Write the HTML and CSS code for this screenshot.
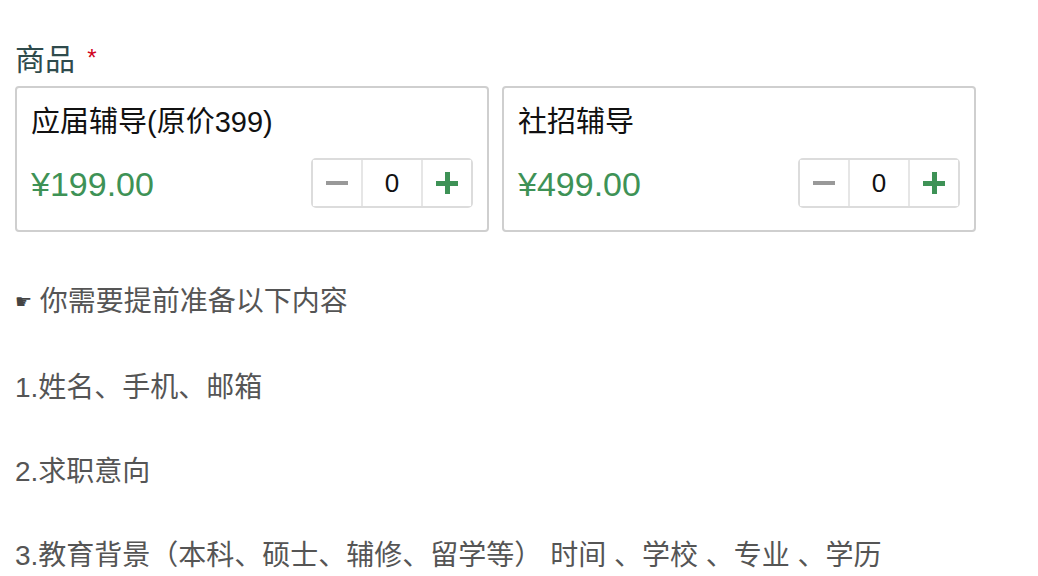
FILE: index.html
```html
<!DOCTYPE html>
<html lang="zh-CN">
<head>
    <meta charset="UTF-8">
    <meta name="viewport" content="width=device-width, initial-scale=1.0">
    <title>商品</title>
    <link rel="stylesheet" href="styles.css">
</head>
<body>
<div class="page">
    <div class="field-label">商品 <span class="required">*</span></div>

    <div class="goods">
        <div class="goods-card">
            <div class="goods-name">应届辅导(原价399)</div>
            <div class="goods-row">
                <span class="goods-price">¥199.00</span>
                <div class="stepper">
                    <button class="step minus" aria-label="减少"><span class="bar"></span></button>
                    <input class="count" type="text" value="0">
                    <button class="step plus" aria-label="增加"><span class="bar"></span><span class="bar vert"></span></button>
                </div>
            </div>
        </div>
        <div class="goods-card">
            <div class="goods-name">社招辅导</div>
            <div class="goods-row">
                <span class="goods-price">¥499.00</span>
                <div class="stepper">
                    <button class="step minus" aria-label="减少"><span class="bar"></span></button>
                    <input class="count" type="text" value="0">
                    <button class="step plus" aria-label="增加"><span class="bar"></span><span class="bar vert"></span></button>
                </div>
            </div>
        </div>
    </div>

    <div class="notes">
        <p><span class="hand">☛</span> 你需要提前准备以下内容</p>
        <p>1.姓名、手机、邮箱</p>
        <p>2.求职意向</p>
        <p>3.教育背景（本科、硕士、辅修、留学等） 时间 、学校 、专业 、学历</p>
    </div>
</div>
</body>
</html>
```

FILE: styles.css
```css
body {
    font-family: "Liberation Sans", "Noto Sans CJK SC", sans-serif;
    background-color: #fff;
    margin: 0;
    padding: 0;
}
.page {
    padding: 40px 15px 0;
}
.field-label {
    font-size: 30px;
    line-height: 40px;
    color: #2f4b4c;
}
.required {
    color: #d0021b;
    font-size: 24px;
    vertical-align: top;
    position: relative;
    top: -2px;
    margin-left: 4px;
}
.goods {
    display: flex;
    gap: 13px;
    margin-top: 6px;
    width: 961px;
}
.goods-card {
    flex: 1;
    border: 2px solid #cfcfcf;
    border-radius: 4px;
    padding: 14px 14px 22px;
}
.goods-name {
    font-size: 29px;
    line-height: 40px;
    color: #111;
}
.goods-row {
    display: flex;
    justify-content: space-between;
    align-items: center;
    margin-top: 16px;
}
.goods-price {
    font-size: 34px;
    color: #3e9256;
    position: relative;
    top: 1px;
}
.stepper {
    display: flex;
    height: 50px;
    border: 2px solid #dcdcdc;
    border-radius: 5px;
    box-sizing: border-box;
}
.step {
    width: 48px;
    border: none;
    background: #fff;
    padding: 0;
    position: relative;
    cursor: pointer;
}
.step .bar {
    position: absolute;
    left: 13px;
    top: 21px;
    width: 22px;
    height: 4px;
    background-color: #999;
}
.step.plus .bar {
    background-color: #3e9256;
    height: 5px;
}
.step.plus .bar.vert {
    left: 22px;
    top: 12px;
    width: 5px;
    height: 22px;
}
.count {
    width: 62px;
    border: none;
    border-left: 2px solid #e6e6e6;
    border-right: 2px solid #e6e6e6;
    box-sizing: border-box;
    text-align: center;
    font-family: inherit;
    font-size: 26px;
    color: #111;
    padding: 0;
    outline: none;
}
.notes {
    margin-top: 49px;
}
.notes p {
    margin: 0 0 42px;
    font-size: 28px;
    line-height: 42px;
    color: #555;
}
.hand {
    font-family: "DejaVu Sans", sans-serif;
    font-size: 19px;
    color: #444;
    position: relative;
    top: -3px;
}
```
